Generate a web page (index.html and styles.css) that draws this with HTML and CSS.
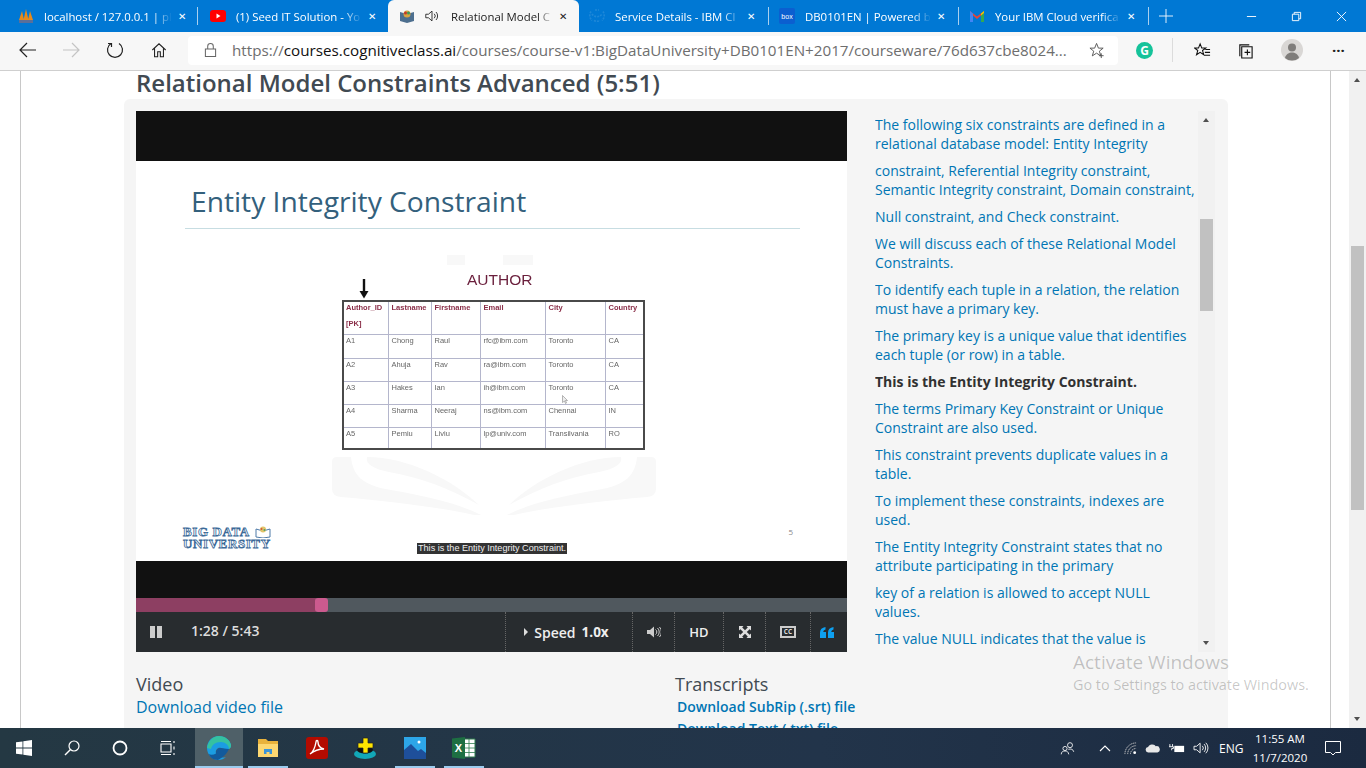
FILE: index.html
```html
<!DOCTYPE html>
<html>
<head>
    <meta charset="utf-8">
    <title>Relational Model Constraints Advanced</title>
    <link rel="stylesheet" href="styles.css">
</head>
<body>
<div class="tabbar">
    <div class="tab tab-first sep">
        <svg class="fav" viewBox="0 0 16 16"><path d="M1 12 4 3l2 9zM5.500 12 8 1l2.500 11zM10 12l2-9 3 9z" fill="#e88a1a"/><rect x="1" y="12" width="14" height="3" fill="#5a6f9a"/></svg>
        <span class="tab-title">localhost / 127.0.0.1 | pl</span>
        <span class="tab-x">&#10005;</span>
    </div>
    <div class="tab tab-second">
        <svg class="fav" viewBox="0 0 16 16"><rect y="2" width="16" height="12" rx="3" fill="#f00"/><path d="M6.500 5.500v5l4-2.500z" fill="#fff"/></svg>
        <span class="tab-title">(1) Seed IT Solution - Yo</span>
        <span class="tab-x">&#10005;</span>
    </div>
    <div class="tab tab-active">
        <svg class="fav" viewBox="0 0 16 16"><path d="M1 4l7 2 7-2v9l-7 2-7-2z" fill="#4d6f8f"/><circle cx="8" cy="6" r="3.500" fill="#d9a441"/><circle cx="6.500" cy="5" r="1.500" fill="#c0392b"/><circle cx="9.500" cy="5" r="1.500" fill="#3a9a5a"/></svg>
        <svg class="speaker" viewBox="0 0 18 16"><path d="M2 6h3l4-3.500v11L5 10H2zM11.500 5.500a3.500 3.500 0 0 1 0 5M13.500 3.500a6.500 6.500 0 0 1 0 9" fill="none" stroke="#222" stroke-width="1"/></svg>
        <span class="tab-title">Relational Model C</span>
        <span class="tab-x">&#10005;</span>
    </div>
    <div class="tab tab-fourth sep">
        <svg class="fav" viewBox="0 0 16 16"><path d="M3 6a6 6 0 0 0 10 0M2 3.500a7 7 0 0 0 1 9M14 3.500a7 7 0 0 1-1 9M5 12.500a6 6 0 0 0 6 0M6 2h4" fill="none" stroke="#1e88d8" stroke-width="1.600" stroke-dasharray="2 1"/></svg>
        <span class="tab-title">Service Details - IBM Cl</span>
        <span class="tab-x">&#10005;</span>
    </div>
    <div class="tab tab-near sep">
        <svg class="fav" viewBox="0 0 16 16"><rect width="16" height="16" rx="2" fill="#0b5fd0"/><text x="8" y="10.500" text-anchor="middle" class="box-text">box</text></svg>
        <span class="tab-title">DB0101EN | Powered by</span>
        <span class="tab-x">&#10005;</span>
    </div>
    <div class="tab tab-near sep">
        <svg class="fav" viewBox="0 0 16 16"><path d="M1 14V3l7 5.500L15 3v11h-3V7.500L8 11 4 7.500V14z" fill="#ea4335"/><path d="M1 14V3l3 2.500V14z" fill="#4285f4"/><path d="M15 14V3l-3 2.500V14z" fill="#34a853"/><path d="M12 5.500 15 3v2l-3 2.500z" fill="#fbbc04"/></svg>
        <span class="tab-title">Your IBM Cloud verifica</span>
        <span class="tab-x">&#10005;</span>
    </div>
    <svg class="new-tab" viewBox="0 0 16 16"><path d="M8 0v16M0 8h16" stroke="#fff" stroke-width="1"/></svg>
    <div class="win-controls">
        <svg viewBox="0 0 12 12"><path d="M1 6h10" stroke="#fff"/></svg>
        <svg viewBox="0 0 12 12"><path d="M1.500 3.500h7v7h-7zM3.500 3.500v-2h7v7h-2" fill="none" stroke="#fff"/></svg>
        <svg viewBox="0 0 12 12"><path d="M1 1l10 10M11 1 1 11" stroke="#fff"/></svg>
    </div>
</div>

<div class="toolbar">
    <svg class="tool-back" viewBox="0 0 18 16"><path d="M17 8H1M8 1 1 8l7 7" fill="none" stroke="#222" stroke-width="1.200"/></svg>
    <svg class="tool-forward" viewBox="0 0 18 16"><path d="M1 8h16M10 1l7 7-7 7" fill="none" stroke="#c4c4c4" stroke-width="1.200"/></svg>
    <svg class="tool-reload" viewBox="0 0 18 18"><path d="M5 2.500a7.500 7.500 0 1 0 8 0M5.500 6V2.500H2" fill="none" stroke="#222" stroke-width="1.200"/></svg>
    <svg class="tool-home" viewBox="0 0 18 18"><path d="M1.500 9 9 2l7.500 7M4 7v9.500h3.500V11h3v5.500H14V7" fill="none" stroke="#222" stroke-width="1.200"/></svg>
    <div class="urlbar">
        <svg class="lock" viewBox="0 0 14 16"><path d="M1.500 7h11v8h-11zM4 7V4a3 3 0 0 1 6 0v3" fill="none" stroke="#666" stroke-width="1.100"/></svg>
        <span class="url"><span class="url-dim">https://</span>courses.cognitiveclass.ai<span class="url-dim">/courses/course-v1:BigDataUniversity+DB0101EN+2017/courseware/76d637cbe8024...</span></span>
        <svg class="star" viewBox="0 0 18 18"><path d="M8 1.500l2 5h5l-4 3.200 1.500 5L8 11.800l-4.500 2.900L5 9.700 1 6.500h5zM13 12v5M10.500 14.500h5" fill="none" stroke="#555" stroke-width="1"/></svg>
    </div>
    <span class="grammarly">G</span>
    <span class="tool-sep"></span>
    <svg class="tool-favs" viewBox="0 0 18 18"><path d="M6.500 2l1.700 4.300h4.300L9 9l1.300 4.500-3.800-2.600-3.800 2.600L4 9 .5 6.300h4.300zM12 8h5M11.500 11h5.500M10.500 14h6.500" fill="none" stroke="#111" stroke-width="1.100"/></svg>
    <svg class="tool-coll" viewBox="0 0 18 18"><path d="M5 5h11v12H5zM3 15V3h10M11 8v6M8 11h6" fill="none" stroke="#111" stroke-width="1.200"/></svg>
    <svg class="avatar" viewBox="0 0 22 22"><circle cx="11" cy="11" r="11" fill="#d9d7d5"/><circle cx="11" cy="8.500" r="4" fill="#7f7d7b"/><path d="M4 19c1-4 4-5.500 7-5.500s6 1.500 7 5.500a11 11 0 0 1-14 0z" fill="#7f7d7b"/></svg>
    <span class="more">&middot;&middot;&middot;</span>
</div>

<div class="viewport">
    <div class="page">
        <h2 class="unit-title">Relational Model Constraints Advanced (5:51)</h2>
        <div class="card">
            <div class="video-row">
                <div class="player">
                    <div class="black-top"></div>
                    <div class="slide">
                        <svg class="watermark" viewBox="0 0 324 260">
                            <path d="M115 0h18v10h-18zM171 0h30v10h-30z" fill="#f8f8f8"/>
                            <g id="wing" fill="#f8f8f8">
                                <path d="M0 207q0-5 5-5h14c2 18 10 28 40 33 40 7 70 14 96 28-40-10-90-16-146-21q-9-1-9-8z"/>
                                <path d="M35 202c40 0 85 22 112 48-30-17-60-28-90-33-15-3-24-8-22-15z"/>
                            </g>
                            <use href="#wing" transform="matrix(-1 0 0 1 324 0)"/>
                        </svg>
                        <h3 class="slide-title">Entity Integrity Constraint</h3>
                        <div class="slide-line"></div>
                        <div class="slide-body">
                            <div class="table-head">
                                <svg class="pk-arrow" viewBox="0 0 12 20"><path d="M6 0v13" stroke="#111" stroke-width="2.400"/><path d="M1.500 12h9L6 19.500z" fill="#111"/></svg>
                                <span class="table-name">AUTHOR</span>
                            </div>
                            <table class="author">
                                <tr class="row-head"><th class="c1">Author_ID<span class="pk">[PK]</span></th><th class="c2">Lastname</th><th class="c3">Firstname</th><th class="c4">Email</th><th class="c5">City</th><th class="c6">Country</th></tr>
                                <tr class="row-a"><td>A1</td><td>Chong</td><td>Raul</td><td>rfc@ibm.com</td><td>Toronto</td><td>CA</td></tr>
                                <tr class="row-b"><td>A2</td><td>Ahuja</td><td>Rav</td><td>ra@ibm.com</td><td>Toronto</td><td>CA</td></tr>
                                <tr class="row-b"><td>A3</td><td>Hakes</td><td>Ian</td><td>ih@ibm.com</td><td>Toronto</td><td>CA</td></tr>
                                <tr class="row-b"><td>A4</td><td>Sharma</td><td>Neeraj</td><td>ns@ibm.com</td><td>Chennai</td><td>IN</td></tr>
                                <tr class="row-c"><td>A5</td><td>Pemiu</td><td>Liviu</td><td>lp@univ.com</td><td>Transilvania</td><td>RO</td></tr>
                            </table>
                            <svg class="slide-cursor" viewBox="0 0 6 9"><path d="M.5.500v7l2-1.500 1 2.500 1-.5-1-2.500H5.500z" fill="#eee" stroke="#888" stroke-width=".6"/></svg>
                        </div>
                        <div class="slide-foot">
                            <div class="bdu">
                                <div class="bdu-line">BIG DATA
                                    <svg class="bdu-book" viewBox="0 0 16 12"><path d="M1 3l7 2 7-2v8l-7 1-7-1z" fill="none" stroke="#4f7ba8"/><circle cx="8" cy="3.500" r="3" fill="#e2c46a"/><circle cx="6.500" cy="3" r="1" fill="#d0563c"/><circle cx="9.500" cy="4" r="1" fill="#4fa06a"/></svg>
                                </div>
                                <div class="bdu-line">UNIVERSITY</div>
                            </div>
                            <span class="slide-num">5</span>
                        </div>
                        <span class="caption">This is the Entity Integrity Constraint.</span>
                    </div>
                    <div class="black-bottom"></div>
                    <div class="progress"><div class="played"></div><div class="handle"></div></div>
                    <div class="controls">
                        <svg class="pause" viewBox="0 0 12 12"><path d="M0 0h5v12H0zM7 0h5v12H7z" fill="#ccc"/></svg>
                        <span class="time">1:28 / 5:43</span>
                        <div class="ctl ctl-speed"><span class="caret"></span>Speed <b class="rate">1.0x</b></div>
                        <div class="ctl ctl-vol"><svg viewBox="0 0 14 12" class="ctl-icon"><path d="M0 4h3l4-3.500v11L3 8H0z" fill="#ccc"/><path d="M8.500 3.500a3 3 0 0 1 0 5M10.500 2a5.500 5.500 0 0 1 0 8M12.500 1a7.500 7.500 0 0 1 0 10" fill="none" stroke="#ccc"/></svg></div>
                        <div class="ctl ctl-hd">HD</div>
                        <div class="ctl ctl-full"><svg viewBox="0 0 12 12" class="ctl-icon"><path d="M0 0h4.500L3.200 1.400 6 4.200l2.800-2.800L7.500 0H12v4.500l-1.400-1.300L7.800 6l2.800 2.800L12 7.500V12H7.500l1.300-1.400L6 7.800l-2.800 2.800L4.500 12H0V7.500l1.400 1.300L4.200 6 1.400 3.200 0 4.500z" fill="#ddd"/></svg></div>
                        <div class="ctl ctl-cc"><span class="cc">CC</span></div>
                        <div class="ctl ctl-quote"><svg viewBox="0 0 14 11" class="ctl-quote-icon"><path d="M0 11V5.500C0 2.500 2 .5 5.500 0v2.500C4 3 3.300 3.800 3.300 5H6v6zM8 11V5.500C8 2.500 10 .5 13.500 0v2.500C12 3 11.300 3.800 11.300 5H14v6z" fill="#0ea0f0"/></svg></div>
                    </div>
                </div>
                <div class="transcript">
                    <div class="lines">
                        <p>The following six constraints are defined in a<br>relational database model: Entity Integrity</p>
                        <p>constraint, Referential Integrity constraint,<br>Semantic Integrity constraint, Domain constraint,</p>
                        <p>Null constraint, and Check constraint.</p>
                        <p>We will discuss each of these Relational Model<br>Constraints.</p>
                        <p>To identify each tuple in a relation, the relation<br>must have a primary key.</p>
                        <p>The primary key is a unique value that identifies<br>each tuple (or row) in a table.</p>
                        <p class="current">This is the Entity Integrity Constraint.</p>
                        <p>The terms Primary Key Constraint or Unique<br>Constraint are also used.</p>
                        <p>This constraint prevents duplicate values in a<br>table.</p>
                        <p>To implement these constraints, indexes are<br>used.</p>
                        <p>The Entity Integrity Constraint states that no<br>attribute participating in the primary</p>
                        <p>key of a relation is allowed to accept NULL<br>values.</p>
                        <p>The value NULL indicates that the value is</p>
                    </div>
                    <div class="scroll scroll-inner">
                        <span class="arrow-up"></span>
                        <span class="thumb-inner"></span>
                        <span class="arrow-down"></span>
                    </div>
                </div>
            </div>
            <div class="downloads">
                <div class="dl-video">
                    <h4>Video</h4>
                    <a class="dl-link">Download video file</a>
                </div>
                <div class="dl-trans">
                    <h4>Transcripts</h4>
                    <a class="dl-bold">Download SubRip (.srt) file</a>
                    <a class="dl-bold">Download Text (.txt) file</a>
                </div>
            </div>
        </div>
    </div>
    <div class="scroll scroll-page">
        <span class="arrow-up"></span>
        <span class="thumb-page"></span>
        <span class="arrow-down"></span>
    </div>
    <div class="activate">
        <div class="activate-big">Activate Windows</div>
        <div class="activate-small">Go to Settings to activate Windows.</div>
    </div>
</div>

<div class="taskbar">
    <div class="task-cell"><svg class="task-icon" viewBox="0 0 16 16"><path d="M0 2.300 6.500 1.400v6.200H0zM7.300 1.300 16 0v7.600H7.300zM0 8.400h6.500v6.200L0 13.700zM7.300 8.400H16V16l-8.700-1.200z" fill="#fff"/></svg></div>
    <div class="task-cell"><svg class="task-icon" viewBox="0 0 16 16"><circle cx="10" cy="6" r="5" fill="none" stroke="#fff" stroke-width="1.200"/><path d="M6.500 9.500 1 15" stroke="#fff" stroke-width="1.400"/></svg></div>
    <div class="task-cell"><svg class="task-icon" viewBox="0 0 16 16"><circle cx="8" cy="8" r="6.500" fill="none" stroke="#fff" stroke-width="1.800"/></svg></div>
    <div class="task-cell"><svg class="task-icon" viewBox="0 0 16 16"><path d="M1 4h10v8H1zM1 1.500h10M1 14.500h10M14 1v2M14 6.500v3M14 13v2" fill="none" stroke="#fff" stroke-width="1.100"/></svg></div>
    <div class="task-cell task-active">
        <svg class="task-app" viewBox="0 0 24 24"><path d="M12 0C5 0 0 5.500 0 12c0 7 5.500 12 11 12 3.500 0 6-1 8-3-4 1.500-9 0-10-3.500C8 14 11 11 14 12c4 1 6 2 8 1 2-1 2-3 2-4C23 4 18 0 12 0z" fill="#1b9de2"/><path d="M0 12C1 5 6 0 12 0c6 0 11 4 12 9 0 1 0 3-2 4 0-4-4-7-8-7-6 0-9 3-10 7z" fill="#35c1a0"/><path d="M9 17.500c0-4 2-5.500 5-5.500 2 0 4 1 8 1-2 4-5 8-11 11-5 0-8-3-9.500-6 2 1 5 1 7.500-.5z" fill="#125a9c"/></svg>
    </div>
    <div class="task-cell task-open task-explorer">
        <svg class="task-app" viewBox="0 0 24 24"><path d="M2 3h8l2 2h10v16H2z" fill="#e8b23c"/><path d="M2 8h20v13H2z" fill="#fcd771"/><path d="M8 13h8v5h-2.500v-2h-3v2H8z" fill="#3a94d8"/></svg>
    </div>
    <div class="task-cell"><svg class="task-app" viewBox="0 0 24 24"><rect x="1" y="1" width="22" height="22" rx="3" fill="#b30b00"/><path d="M5 18c3-2 5-6 6-12 0-2 2-2 2 0 0 4 2 6 6 7-5 0-9 1-14 5z" fill="none" stroke="#fff" stroke-width="1.400"/></svg></div>
    <div class="task-cell"><svg class="task-app" viewBox="0 0 24 24"><ellipse cx="12" cy="18" rx="11" ry="5" fill="#12a8b8"/><ellipse cx="12" cy="14" rx="8" ry="3.500" fill="#111"/><path d="M10 2h5v5h5v5h-5v5h-5v-5H5V7h5z" fill="#ffe600" stroke="#222" stroke-width=".7"/></svg></div>
    <div class="task-cell task-open task-photos">
        <svg class="task-app" viewBox="0 0 24 24"><rect x="1" y="1" width="22" height="22" fill="#2da6e8"/><path d="M1 23V14l7-6 7 7 3-2 5 4v6z" fill="#1e4f9a"/><circle cx="16" cy="6" r="1.500" fill="#fff"/></svg>
    </div>
    <div class="task-cell task-open task-excel">
        <svg class="task-app" viewBox="0 0 24 24"><path d="M8 3h15v18H8z" fill="#fff" stroke="#2e7d4f"/><path d="M12 3v18M17 3v18M8 7.500h15M8 12h15M8 16.500h15" stroke="#2e7d4f" stroke-width=".8"/><path d="M0 2.500 13 1v22L0 21.500z" fill="#1d6f42"/><text x="6.500" y="16" text-anchor="middle" class="xl-text">X</text></svg>
    </div>
    <div class="tray">
        <svg class="tray-people" viewBox="0 0 18 18"><circle cx="12" cy="5" r="3" fill="none" stroke="#fff"/><circle cx="6" cy="9" r="2.500" fill="none" stroke="#fff"/><path d="M1.500 16c0-3 2-4 4.500-4s4 1 4.500 4M10 10c3-1 6 0 6.500 3" fill="none" stroke="#fff"/></svg>
        <svg class="tray-caret" viewBox="0 0 12 8"><path d="M1 7l5-5 5 5" fill="none" stroke="#fff" stroke-width="1.100"/></svg>
        <svg class="tray-wifi" viewBox="0 0 14 14"><path d="M1 13A12 12 0 0 1 13 1M4 13a9 9 0 0 1 9-9M7 13a6 6 0 0 1 6-6" fill="none" stroke="#ccc" stroke-dasharray="1.500 .7"/><circle cx="11.500" cy="11.500" r="1.500" fill="#fff"/></svg>
        <svg class="tray-cloud" viewBox="0 0 18 10"><path d="M4 10a3 3 0 0 1-.5-6A5 5 0 0 1 12 3a3.500 3.500 0 0 1 2 7z" fill="#e8e8e8"/></svg>
        <svg class="tray-batt" viewBox="0 0 18 12"><path d="M1 1v3M4 1v3M0 4h5v2H3v2" fill="none" stroke="#fff"/><rect x="6" y="3" width="11" height="7" fill="#fff"/></svg>
        <svg class="tray-vol" viewBox="0 0 18 16"><path d="M1 6h3l4-3.500v11L4 10H1zM10.500 5.500a3.500 3.500 0 0 1 0 5M12.500 3.500a6.500 6.500 0 0 1 0 9M14.500 2a8.500 8.500 0 0 1 0 12" fill="none" stroke="#fff" stroke-width="1"/></svg>
        <span class="tray-lang">ENG</span>
        <div class="clock"><div>11:55 AM</div><div>11/7/2020</div></div>
        <svg class="tray-notif" viewBox="0 0 16 15"><path d="M.5.500h15v11h-5L8 14l-2.500-2.500h-5z" fill="none" stroke="#fff"/></svg>
    </div>
</div>
</body>
</html>
```
FILE: styles.css
```css
* {
    box-sizing: border-box;
}
html, body {
    margin: 0;
    height: 100%;
    overflow: hidden;
}
body {
    display: flex;
    flex-direction: column;
    width: 1366px;
    height: 768px;
    font-family: "Open Sans", sans-serif;
    background: #fff;
}

/* browser tabs */
.tabbar {
    display: flex;
    height: 32px;
    flex: none;
    align-items: stretch;
    background: #0078d4;
    color: #fff;
    font-size: 11.400px;
}
.tab {
    position: relative;
    display: flex;
    align-items: center;
    width: 190px;
    padding: 0 8px 0 15px;
    flex: none;
}
.tab-first {
    width: 198px;
    padding: 0 6px 0 18px;
}
.tab-second {
    padding: 0 6px 0 12px;
}
.tab-fourth, .tab-near {
    padding-left: 10px;
}
.sep::after {
    content: "";
    position: absolute;
    right: 0;
    top: 7px;
    bottom: 7px;
    width: 1px;
    background: #a9d0ef;
}
.tab-active {
    width: 191px;
    background: #f7f7f7;
    color: #222;
    border-radius: 6px 6px 0 0;
    padding: 0 6px 0 11px;
}
.fav {
    width: 16px;
    height: 16px;
    flex: none;
    margin-right: 10px;
}
.speaker {
    width: 16px;
    height: 16px;
    flex: none;
    margin: 0 11px 0 -1px;
}
.tab-title {
    flex: 1;
    min-width: 0;
    white-space: nowrap;
    -webkit-mask-image: linear-gradient(to right, #000 85%, transparent);
    mask-image: linear-gradient(to right, #000 85%, transparent);
}
.tab-x {
    flex: none;
    width: 20px;
    font-size: 10px;
    text-align: center;
}
.box-text {
    fill: #fff;
    font: 7px "Liberation Sans", sans-serif;
}
.new-tab {
    width: 14px;
    height: 14px;
    margin: 9px 0 0 10px;
}
.win-controls {
    display: flex;
    margin-left: auto;
    align-items: center;
    gap: 34px;
    padding-right: 19px;
}
.win-controls svg {
    width: 11px;
    height: 11px;
}

/* address bar row */
.toolbar {
    display: flex;
    align-items: center;
    height: 39px;
    flex: none;
    background: #f7f7f7;
    border-bottom: 1px solid #cfcfcf;
    padding-bottom: 2px;
}
.toolbar svg {
    flex: none;
}
.tool-back, .tool-forward {
    width: 18px;
    height: 16px;
}
.tool-back {
    margin-left: 19px;
}
.tool-forward {
    margin-left: 25px;
}
.tool-reload {
    width: 18px;
    height: 18px;
    margin-left: 26px;
}
.tool-home {
    width: 16px;
    height: 16px;
    margin-left: 27px;
}
.urlbar {
    display: flex;
    align-items: center;
    width: 930px;
    height: 29px;
    margin-left: 21px;
    background: #fff;
    border-radius: 4px;
    padding: 0 12px 0 16px;
}
.lock {
    width: 13px;
    height: 16px;
}
.url {
    flex: 1;
    margin-left: 15px;
    font-size: 15.200px;
    color: #111;
    white-space: nowrap;
}
.url-dim {
    color: #6e6e6e;
}
.star {
    width: 17px;
    height: 17px;
    margin-left: -10px;
}
.grammarly {
    width: 17px;
    height: 17px;
    margin-left: 18px;
    border-radius: 50%;
    background: #15c39a;
    color: #fff;
    font-size: 12px;
    font-weight: 700;
    line-height: 17px;
    text-align: center;
}
.tool-sep {
    width: 1px;
    height: 24px;
    margin-left: 19px;
    background: #dcdcdc;
}
.tool-favs {
    width: 17px;
    height: 17px;
    margin-left: 21px;
}
.tool-coll {
    width: 17px;
    height: 17px;
    margin-left: 26px;
}
.avatar {
    width: 22px;
    height: 22px;
    margin-left: 27px;
}
.more {
    margin-left: 29px;
    font-size: 15px;
    font-weight: 700;
    color: #222;
}

/* page */
.viewport {
    position: relative;
    display: flex;
    flex: 1;
    min-height: 0;
    overflow: hidden;
}
.page {
    width: 1311px;
    margin-left: 20px;
    border-left: 1px solid #c8c8c8;
    border-right: 1px solid #c8c8c8;
    padding: 0 0 0 103px;
    flex: none;
}
.unit-title {
    margin: 0 0 5px 12px;
    height: 23px;
    font-size: 24px;
    font-weight: 600;
    line-height: 23px;
    color: #414a52;
}
.card {
    width: 1104px;
    height: 700px;
    padding: 12px 12px 0;
    background: #f5f5f5;
    border-radius: 6px;
}
.video-row {
    display: flex;
    height: 541px;
}
.player {
    width: 711px;
    flex: none;
    display: flex;
    flex-direction: column;
}
.black-top {
    height: 50px;
    background: #111;
}
.black-bottom {
    height: 37px;
    background: #111;
}
.slide {
    position: relative;
    display: flex;
    flex-direction: column;
    height: 400px;
    background: #fff;
    padding: 0 47px 0 49px;
}
.watermark {
    position: absolute;
    left: 196px;
    top: 94px;
    width: 324px;
    height: 260px;
}
.slide-title {
    position: relative;
    margin: 20px 0 0 6px;
    font-size: 28.200px;
    font-weight: 400;
    line-height: 40px;
    color: #33607c;
    white-space: nowrap;
}
.slide-line {
    height: 1px;
    margin-top: 7px;
    background: #c7dde2;
}
.slide-body {
    position: relative;
    width: 302px;
    margin-left: 157px;
    margin-top: 40px;
    height: 188px;
}
.table-head {
    display: flex;
    height: 31px;
    padding-left: 16px;
}
.pk-arrow {
    width: 12px;
    height: 20px;
    margin-top: 10px;
}
.table-name {
    margin: 1px 0 0 97px;
    font-family: "Liberation Sans", sans-serif;
    font-size: 15.500px;
    line-height: 20px;
    color: #6a1f3c;
    filter: blur(.3px);
}
.author {
    width: 301px;
    border-collapse: collapse;
    table-layout: fixed;
    border: 2px solid #4a4a4a;
    font-family: "Liberation Sans", sans-serif;
    font-size: 7.500px;
    color: #666;
    filter: blur(.3px);
}
.author th, .author td {
    border: 1px solid #b4b6cc;
    padding: 1px 3px 0;
    text-align: left;
    vertical-align: top;
    overflow: hidden;
    white-space: nowrap;
    line-height: 10px;
}
.author th:first-child, .author td:first-child {
    padding-left: 2px;
}
.author th {
    color: #8a2e48;
    font-weight: 700;
}
.pk {
    display: block;
    margin-top: 6px;
}
.c1 { width: 45px; }
.c2 { width: 43px; }
.c3 { width: 49px; }
.c4 { width: 65px; }
.c5 { width: 60px; }
.c6 { width: 39px; }
.row-head { height: 33px; }
.row-a { height: 24px; }
.row-b { height: 23px; }
.row-c { height: 22px; }
.slide-cursor {
    position: absolute;
    left: 220px;
    top: 126px;
    width: 6px;
    height: 9px;
}
.slide-foot {
    display: flex;
    justify-content: space-between;
    align-items: flex-end;
    margin-top: auto;
    padding: 0 7px 11px 0;
    margin-left: -2px;
}
.bdu {
    font-family: "Liberation Serif", serif;
    font-weight: 700;
    font-size: 13px;
    line-height: 12px;
    color: #fff;
    -webkit-text-stroke: .8px #3c6a98;
    letter-spacing: .6px;
}
.bdu-line {
    display: flex;
    align-items: center;
    gap: 5px;
}
.bdu-book {
    width: 16px;
    height: 12px;
}
.slide-num {
    font-size: 8px;
    color: #888;
    margin-bottom: 13px;
}
.caption {
    position: absolute;
    left: 281px;
    bottom: 7px;
    padding: 0 1px;
    background: #333;
    color: #eee;
    font-family: "Liberation Sans", sans-serif;
    font-size: 9.100px;
    line-height: 11px;
    white-space: nowrap;
}
.progress {
    position: relative;
    height: 14px;
    background: #50585e;
}
.played {
    width: 180px;
    height: 100%;
    background: #8d3f62;
}
.handle {
    position: absolute;
    left: 179px;
    top: 0;
    width: 13px;
    height: 14px;
    border-radius: 3px;
    background: #cb5a8e;
}
.controls {
    display: flex;
    align-items: stretch;
    height: 40px;
    background: #282c2f;
    color: #ddd;
    font-size: 14px;
    font-weight: 600;
}
.pause {
    width: 12px;
    height: 12px;
    margin: 14px 0 0 14px;
}
.time {
    margin-left: 29px;
    width: 314px;
    line-height: 38px;
}
.ctl {
    display: flex;
    align-items: center;
    justify-content: center;
    border-left: 1px dotted #666;
}
.ctl-speed { width: 127px; color: #eee; padding-right: 5px; }
.ctl-vol { width: 42px; }
.ctl-hd { width: 49px; color: #eee; font-size: 13px; }
.ctl-full { width: 42px; }
.ctl-cc { width: 45px; }
.ctl-quote { flex: 1; padding-right: 4px; }
.caret {
    width: 0;
    height: 0;
    margin-right: 6px;
    border-left: 4px solid #ddd;
    border-top: 4px solid transparent;
    border-bottom: 4px solid transparent;
}
.rate {
    margin-left: 6px;
    font-weight: 700;
    font-size: 13.500px;
}
.ctl-icon {
    width: 14px;
    height: 12px;
}
.cc {
    width: 16px;
    height: 12px;
    border: 2px solid #ccc;
    font-size: 6.500px;
    font-weight: 700;
    line-height: 8px;
    text-align: center;
}
.ctl-quote-icon {
    width: 14px;
    height: 11px;
}

/* transcript column */
.transcript {
    display: flex;
    flex: 1;
    min-width: 0;
    padding-left: 28px;
}
.lines {
    width: 323px;
    height: 537px;
    flex: none;
    overflow: hidden;
    padding-top: 4px;
    font-size: 14px;
    line-height: 19px;
    color: #0075b4;
    white-space: nowrap;
}
.lines p {
    margin: 0 0 8px;
}
.lines .current {
    color: #313131;
    font-weight: 700;
}
.scroll {
    position: relative;
    display: flex;
    flex-direction: column;
    align-items: center;
    width: 17px;
    background: #f1f1f1;
    flex: none;
}
.scroll-inner {
    height: 541px;
}
.scroll-page {
    height: 100%;
    margin-left: 18px;
}
.arrow-up, .arrow-down {
    position: absolute;
    left: 5px;
    width: 0;
    height: 0;
    border-left: 3.500px solid transparent;
    border-right: 3.500px solid transparent;
}
.arrow-up {
    top: 7px;
    border-bottom: 4px solid #505050;
}
.arrow-down {
    bottom: 7px;
    border-top: 4px solid #505050;
}
.thumb-inner {
    width: 13px;
    height: 92px;
    margin-top: 108px;
    background: #c1c1c1;
}
.thumb-page {
    width: 13px;
    height: 264px;
    margin-top: 175px;
    background: #c1c1c1;
}

/* under the player */
.downloads {
    display: flex;
    margin-top: 20px;
}
.downloads h4 {
    margin: 0;
    font-size: 18px;
    font-weight: 400;
    line-height: 24px;
    color: #414a52;
}
.dl-video {
    width: 539px;
    flex: none;
}
.dl-link {
    display: block;
    font-size: 16px;
    line-height: 22px;
    color: #0075b4;
}
.dl-bold {
    display: block;
    margin-left: 2px;
    font-size: 14px;
    font-weight: 600;
    line-height: 22px;
    color: #0075b4;
}

.activate {
    position: absolute;
    left: 1073px;
    top: 579px;
    color: rgba(0, 0, 0, .22);
    white-space: nowrap;
}
.activate-big {
    font-size: 19px;
    line-height: 24px;
}
.activate-small {
    font-size: 14.400px;
    line-height: 22px;
}

/* windows taskbar */
.taskbar {
    display: flex;
    height: 40px;
    flex: none;
    background: linear-gradient(to right, #243843, #22344a 60%, #1b2a40);
    color: #fff;
}
.task-cell {
    display: flex;
    align-items: center;
    justify-content: center;
    width: 48px;
    flex: none;
}
.task-active {
    margin-left: 3px;
    background: #4f6068;
    box-shadow: inset 0 -2px 0 #9bcbee;
}
.task-open {
    box-shadow: inset 0 -2px 0 #9bcbee;
    width: 40px;
}
.task-explorer {
    margin: 0 5px;
}
.task-photos {
    margin: 0 9px 0 6px;
}
.task-icon {
    width: 16px;
    height: 16px;
}
.task-app {
    width: 24px;
    height: 24px;
}
.xl-text {
    fill: #fff;
    font: 700 11px "Liberation Sans", sans-serif;
}
.tray {
    display: flex;
    align-items: center;
    margin-left: auto;
    font-size: 12px;
}
.tray svg {
    flex: none;
}
.tray-people { width: 15px; height: 15px; }
.tray-caret { width: 12px; height: 8px; margin-left: 24px; }
.tray-wifi { width: 13px; height: 13px; margin-left: 13px; }
.tray-cloud { width: 16px; height: 10px; margin-left: 8px; }
.tray-batt { width: 16px; height: 11px; margin-left: 8px; }
.tray-vol { width: 16px; height: 14px; margin-left: 8px; }
.tray-lang {
    margin-left: 10px;
    width: 30px;
}
.clock {
    width: 60px;
    margin-left: 1px;
    font-size: 11.500px;
    line-height: 19px;
    text-align: center;
}
.tray-notif {
    width: 16px;
    height: 15px;
    margin: 0 25px 0 15px;
}
```
